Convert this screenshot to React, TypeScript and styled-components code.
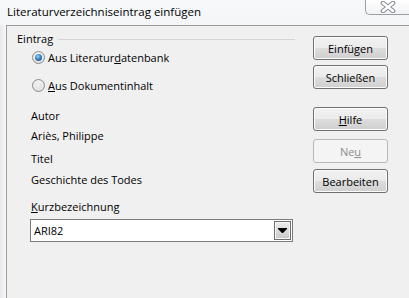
import styled, { createGlobalStyle } from "styled-components";

const GlobalStyle = createGlobalStyle`
  html, body {
    margin: 0;
    padding: 0;
    background: #f4f6f8;
    overflow: hidden;
  }
  * {
    box-sizing: border-box;
  }
`;

const FONT = `"Open Sans", "Noto Sans", "Liberation Sans", sans-serif`;

const App = () => {
  return (
    <Window>
      <GlobalStyle />
      <TitleBar>
        <Title>Literaturverzeichniseintrag einfügen</Title>
        <CloseButton>
          <svg width="18" height="12" viewBox="0 0 18 12">
            <path
              d="M4 2 L14 10 M14 2 L4 10"
              stroke="#8a8f96"
              strokeWidth="4.6"
              strokeLinecap="round"
            />
            <path
              d="M4 2 L14 10 M14 2 L4 10"
              stroke="#ffffff"
              strokeWidth="2.4"
              strokeLinecap="round"
            />
          </svg>
        </CloseButton>
      </TitleBar>
      <Client>
        <LeftPane>
          <GroupHeader>
            <GroupLabel>Eintrag</GroupLabel>
            <GroupLine />
          </GroupHeader>
          <Indent>
            <RadioRow $top={3}>
              <Radio $checked />
              <RadioText>
                Aus Literatur<u>d</u>atenbank
              </RadioText>
            </RadioRow>
            <RadioRow $top={13}>
              <Radio />
              <RadioText>
                <u>A</u>us Dokumentinhalt
              </RadioText>
            </RadioRow>
            <FieldLabel $top={15}>Autor</FieldLabel>
            <FieldValue $top={4}>Ariès, Philippe</FieldValue>
            <FieldLabel $top={7}>Titel</FieldLabel>
            <FieldValue $top={5}>Geschichte des Todes</FieldValue>
            <FieldLabel $top={11}>
              <u>K</u>urzbezeichnung
            </FieldLabel>
            <Combo>
              <ComboText>ARI82</ComboText>
              <ComboButton>
                <svg width="9" height="6" viewBox="0 0 9 6">
                  <path d="M0 0 H9 V1 L5 5 H4 L0 1 Z" fill="#000" />
                </svg>
              </ComboButton>
            </Combo>
          </Indent>
        </LeftPane>
        <ButtonColumn>
          <PushButton $top={0}>Einfügen</PushButton>
          <PushButton $top={5}>Schließen</PushButton>
          <PushButton $top={18}>
            <u>H</u>ilfe
          </PushButton>
          <PushButton $top={8} disabled>
            Ne<u>u</u>
          </PushButton>
          <PushButton $top={6}>Bearbeiten</PushButton>
        </ButtonColumn>
      </Client>
    </Window>
  );
};

const Window = styled.div`
  width: 409px;
  height: 298px;
  display: flex;
  flex-direction: column;
  font-family: ${FONT};
  font-size: 11px;
  color: #000;
  background: linear-gradient(90deg, #e6e8eb 0px, #f6f7f9 6px);
`;

const TitleBar = styled.div`
  height: 25px;
  display: flex;
  align-items: flex-start;
  justify-content: space-between;
  background: linear-gradient(180deg, #f7f8fa, #f3f5f7);
`;

const Title = styled.div`
  padding: 3px 0 0 7px;
  font-size: 11.5px;
  line-height: 17px;
  color: #000;
`;

const CloseButton = styled.div`
  width: 44px;
  height: 16px;
  margin-top: -1px;
  display: flex;
  align-items: center;
  justify-content: center;
  border: 1px solid #9aa0a6;
  border-right: none;
  border-radius: 0 0 0 5px;
  background: linear-gradient(180deg, #ffffff, #f1f2f4);
`;

const Client = styled.div`
  flex: 1;
  margin-left: 6px;
  display: flex;
  background: #f0f0f0;
  border-top: 1px solid #9b9b9b;
  border-left: 1px solid #9b9b9b;
`;

const LeftPane = styled.div`
  width: 288px;
  padding: 5px 0 0 10px;
  display: flex;
  flex-direction: column;
`;

const GroupHeader = styled.div`
  display: flex;
  align-items: center;
  gap: 5px;
`;

const GroupLabel = styled.span`
  line-height: 16px;
`;

const GroupLine = styled.div`
  flex: 1;
  height: 1px;
  margin-top: 1px;
  background: #d5d5d5;
`;

const Indent = styled.div`
  padding-left: 13px;
  display: flex;
  flex-direction: column;
`;

const RadioRow = styled.label<{ $top: number }>`
  margin-top: ${({ $top }) => $top}px;
  padding-left: 2px;
  display: flex;
  align-items: center;
  gap: 3px;
  height: 15px;
`;

const Radio = styled.span<{ $checked?: boolean }>`
  position: relative;
  width: 13px;
  height: 13px;
  border-radius: 50%;
  border: 1px solid #8a8c8f;
  background: radial-gradient(circle at 50% 40%, #ffffff 0%, #eaeaea 55%, #d0d0d0 100%);
  &::after {
    content: "";
    position: absolute;
    left: 2px;
    top: 2px;
    width: 7px;
    height: 7px;
    border-radius: 50%;
    background: ${({ $checked }) =>
      $checked
        ? "radial-gradient(circle at 40% 35%, #9ad2f5 0%, #3b84c2 45%, #14407a 100%)"
        : "radial-gradient(circle at 40% 35%, #f2f2f2 0%, #dcdcdc 100%)"};
  }
`;

const RadioText = styled.span`
  line-height: 15px;
`;

const FieldLabel = styled.div<{ $top: number }>`
  margin-top: ${({ $top }) => $top}px;
  padding-left: 1px;
  line-height: 16px;
`;

const FieldValue = styled.div<{ $top: number }>`
  margin-top: ${({ $top }) => $top}px;
  padding-left: 1px;
  line-height: 16px;
`;

const Combo = styled.div`
  margin-top: 4px;
  height: 23px;
  width: 263px;
  display: flex;
  align-items: center;
  justify-content: space-between;
  background: #fff;
  border: 1px solid #7c7c7c;
  padding: 0 1px 0 3px;
`;

const ComboText = styled.span`
  line-height: 16px;
`;

const ComboButton = styled.div`
  width: 17px;
  height: 19px;
  display: flex;
  align-items: center;
  justify-content: center;
  border: 1px solid #6e6e6e;
  box-shadow: inset 0 0 0 1px #f8f8f8;
  background: linear-gradient(180deg, #ececec, #c9c9c9);
`;

const ButtonColumn = styled.div`
  padding: 10px 0 0 18px;
  display: flex;
  flex-direction: column;
`;

const PushButton = styled.button<{ $top: number }>`
  margin-top: ${({ $top }) => $top}px;
  width: 75px;
  height: 24px;
  padding: 0;
  font-family: ${FONT};
  font-size: 11px;
  color: #000;
  border: 1px solid #707070;
  border-radius: 3px;
  box-shadow: inset 0 0 0 1px #fcfcfc;
  background: linear-gradient(180deg, #f2f2f2 0%, #ebebeb 50%, #dddddd 51%, #cfcfcf 100%);
  &:disabled {
    color: #8d8d8d;
    border-color: #b5b9bc;
    box-shadow: none;
    background: #f4f4f4;
  }
`;

export default App;
